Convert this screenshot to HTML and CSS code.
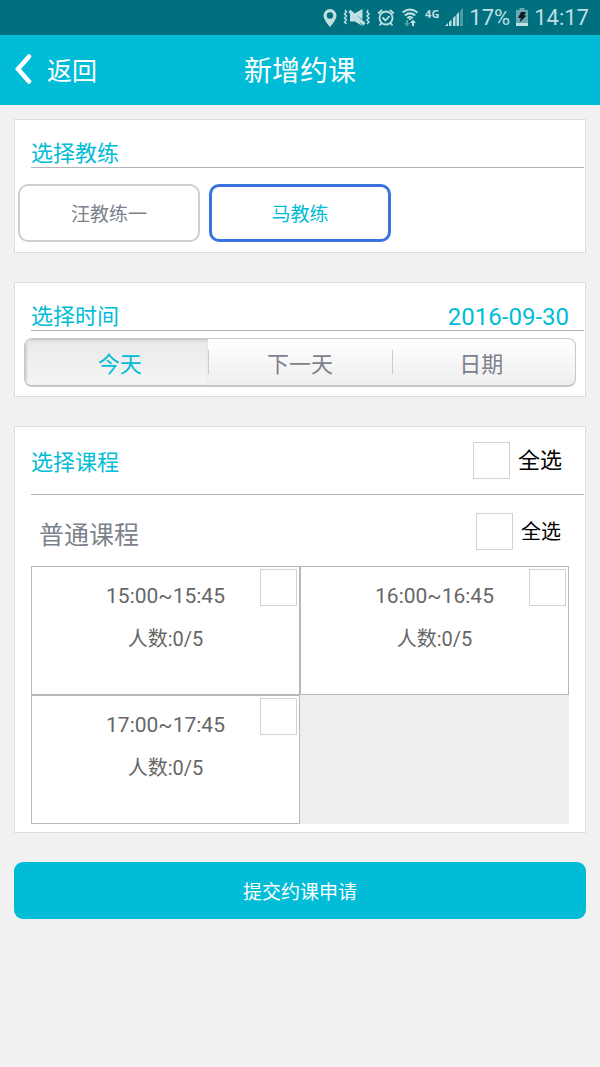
FILE: index.html
```html
<!DOCTYPE html>
<html lang="zh-CN">
<head>
<meta charset="utf-8">
<meta name="viewport" content="width=device-width, initial-scale=1">
<title>新增约课</title>
<link rel="stylesheet" href="styles.css">
</head>
<body>
<div class="status">
  <svg width="14" height="20" viewBox="0 0 14 20" aria-hidden="true"><path fill="currentColor" fill-rule="evenodd" d="M7 1a6.500 6.500 0 0 0-6.500 6.500C.5 12 7 19 7 19s6.500-7 6.500-11.500A6.500 6.500 0 0 0 7 1zm0 3.300a3.200 3.200 0 1 1 0 6.400 3.200 3.200 0 0 1 0-6.400z"/></svg>
  <svg width="28" height="20" viewBox="0 0 28 20" aria-hidden="true"><path fill="currentColor" d="M5.500 3.500 7.500 1.800 22.500 15 20.500 17.500 17 14.500V15L20 18.500 12 13.500H7V6zM11.500 5.500 19.500 1V11.500z"/><path fill="none" stroke="currentColor" stroke-width="1.500" d="m2 2 1.500 2L1.500 6l2 2-2 2 2 2-2 2 2 2M25 2l-1 2 2 2-2 2 2 2-2 2 2 2-2 2"/></svg>
  <svg width="18" height="20" viewBox="0 0 18 20" aria-hidden="true"><g fill="none" stroke="currentColor" stroke-width="1.800"><circle cx="9" cy="10" r="6.500"/><path d="m5.500 9.500 3 3 4-4.500M1.200 5.500 5 1.800M16.800 5.500 13 1.800M4.500 15 2.500 17.500M13.500 15l2 2.500"/></g></svg>
  <svg width="18" height="20" viewBox="0 0 18 20" aria-hidden="true"><g fill="none" stroke="currentColor" stroke-width="2"><path d="M1.500 4.500q7.500-6 15 0M3.800 7.500q5.200-4.300 10.400 0M6.300 10.300q2.700-2.300 5.400 0"/></g><path fill="currentColor" d="m12 11.500 3 3.500h-2v3h-2v-3H9zM8 10.500h2v1.500H8z"/><path fill="currentColor" opacity=".45" d="M5 12h2v3h2l-3 3.500L3 15h2z"/></svg>
  <span class="status-net">4G</span>
  <svg width="18" height="20" viewBox="0 0 18 20" aria-hidden="true"><path fill="currentColor" d="m0 18 3-3v3zM4 14l2.500-2.500V18H4zM8 10l2.500-2.500V18H8zM11.500 6.500 14 4v14h-2.500z"/><path fill="currentColor" opacity=".4" d="m15 3 3-3v18h-3z"/></svg>
  <span>17%</span>
  <svg width="12" height="20" viewBox="0 0 12 20" aria-hidden="true"><path fill="currentColor" opacity=".55" d="M3.500 0h5v2H12v16H0V2h3.500z"/><path fill="currentColor" d="M0 15h12v3H0z"/><path fill="#101c1e" d="M5 4h5L8 7.500h2.500L3.500 14.500l1.500-4.500H2z"/></svg>
  <span>14:17</span>
</div>
<header class="bar">
  <button class="back" type="button"><svg width="18" height="32" viewBox="0 0 18 32" aria-hidden="true"><path fill="none" stroke="currentColor" stroke-width="4.500" stroke-linecap="round" stroke-linejoin="miter" d="M15 2.500 4 15l11 12.500"/></svg><span class="bar-text">返回</span></button>
  <h1 class="bar-title bar-text">新增约课</h1>
</header>
<main class="page">
  <section class="card">
    <div class="card-head"><h2 class="card-title">选择教练</h2></div>
    <div class="coaches">
      <button class="coach" type="button" aria-pressed="false">汪教练一</button>
      <button class="coach coach-on" type="button" aria-pressed="true">马教练</button>
    </div>
  </section>
  <section class="card">
    <div class="card-head"><h2 class="card-title">选择时间</h2><time class="date" datetime="2016-09-30">2016-09-30</time></div>
    <div class="segments">
      <button class="segment segment-on" type="button" aria-pressed="true">今天</button>
      <button class="segment" type="button" aria-pressed="false">下一天</button>
      <button class="segment" type="button" aria-pressed="false">日期</button>
    </div>
  </section>
  <section class="card">
    <div class="card-head card-head-tall"><h2 class="card-title">选择课程</h2><label class="all"><input class="tick" type="checkbox">全选</label></div>
    <div class="group-head"><h3 class="group-title">普通课程</h3><label class="all all-small"><input class="tick" type="checkbox">全选</label></div>
    <div class="slots">
      <label class="slot"><span class="slot-time">15:00~15:45</span><span>人数:0/5</span><input class="tick slot-tick" type="checkbox"></label>
      <label class="slot"><span class="slot-time">16:00~16:45</span><span>人数:0/5</span><input class="tick slot-tick" type="checkbox"></label>
      <label class="slot"><span class="slot-time">17:00~17:45</span><span>人数:0/5</span><input class="tick slot-tick" type="checkbox"></label>
    </div>
  </section>
  <button class="submit" type="button">提交约课申请</button>
</main>
</body>
</html>
```

FILE: styles.css
```css
* { box-sizing: border-box; }
body {
  margin: 0;
  background: #f1f1f1;
  color: #666;
  font-family: Roboto, "Noto Sans CJK SC", sans-serif;
  font-size: 20px;
}
button { margin: 0; padding: 0; border: 0; background: none; color: inherit; font: inherit; cursor: pointer; }
h1, h2, h3 { margin: 0; font-weight: 400; }

.status {
  display: flex;
  justify-content: flex-end;
  align-items: center;
  gap: 6px;
  height: 35px;
  padding-right: 11px;
  background: #00707e;
  color: #bfdfe3;
  font-size: 22px;
}
.status-net { align-self: flex-start; padding-top: 6px; font: 700 11px/15px "Open Sans", sans-serif; }

.bar {
  display: grid;
  grid-template-columns: 1fr auto 1fr;
  align-items: center;
  height: 70px;
  padding: 0 14px;
  background: #00bcd7;
  color: #fff;
}
.bar-text { padding-top: 4px; line-height: 40px; }
.back { display: flex; align-items: center; gap: 15px; justify-self: start; font-size: 25px; }
.bar-title { font-size: 28px; }

.page { display: flex; flex-direction: column; gap: 29px; padding: 14px 14px 29px; }
.card { border: 1px solid #dcdcdc; background: #fff; }
.card-head {
  display: flex;
  align-items: flex-end;
  justify-content: space-between;
  height: 48px;
  margin: 0 1px 0 16px;
  padding-right: 15px;
  border-bottom: 1px solid #b4b4b4;
}
.card-head-tall { align-items: center; height: 68px; padding-right: 22px; }
.card-title, .date { color: #00bcd7; font-size: 22px; line-height: 26px; }
.card-head-tall .card-title { padding-top: 4px; }
.date { font-size: 24px; }

.coaches { display: grid; grid-template-columns: repeat(3, 1fr); gap: 9px; padding: 16px 3px 10px; }
.coach { height: 58px; padding-bottom: 2px; border: 2px solid #cfcfcf; border-radius: 10px; color: #7c828c; font-size: 19px; }
.coach-on { border: 3px solid #3a72e0; color: #00bcd7; }

.segments {
  display: grid;
  grid-template-columns: repeat(3, 1fr);
  height: 49px;
  margin: 7px 9px 9px;
  overflow: hidden;
  border: 1px solid #c8c8c8;
  border-bottom-width: 2px;
  border-radius: 8px;
  background: linear-gradient(#fff, #eee);
}
.segment { color: #7c828c; font-size: 22px; }
.segment + .segment { background: linear-gradient(#ccc, #ccc) left center / 1px 24px no-repeat; }
.segment:first-child { padding-left: 6px; }
.segment:last-child { padding-right: 4px; }
.segment-on { background: linear-gradient(#e9e9e9, #f5f5f5); box-shadow: inset 1px 1px 3px #bbb; color: #00bcd7; }

.all { display: flex; align-items: center; gap: 8px; color: #000; font-size: 22px; line-height: 30px; }
.all-small { font-size: 20px; }
.tick { flex: none; width: 37px; height: 37px; margin: 0; appearance: none; border: 1px solid #d2d2d2; background: #fff; }
.tick:checked { background: #00bcd7; }

.group-head { display: flex; align-items: center; justify-content: space-between; height: 71px; padding: 2px 24px 0 24px; }
.group-title { padding-top: 8px; color: #7c828c; font-size: 25px; line-height: 36px; }
.slots { display: grid; grid-template-columns: 1fr 1fr; margin: 0 16px 8px; background: #efedee; }
.slot {
  position: relative;
  display: flex;
  flex-direction: column;
  align-items: center;
  height: 129px;
  padding-top: 8px;
  border: 1px solid #b6b6bb;
  background: #fff;
  font-size: 20px;
  line-height: 43px;
}
.slot-time { font-size: 21px; }
.slot-tick { position: absolute; top: 2px; right: 2px; }

.submit { height: 57px; border-radius: 9px; background: #00bcd7; color: #fff; font-size: 19px; }
```
